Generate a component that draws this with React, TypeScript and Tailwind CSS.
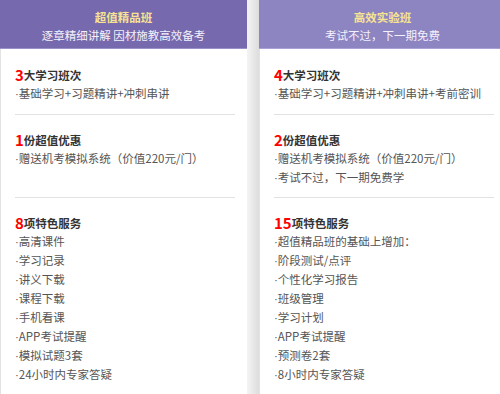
const plans = [
  {
    name: "超值精品班",
    slogan: "逐章精细讲解 因材施教高效备考",
    head: "bg-[#7669ad] border-[#9a91ca]",
    sections: [
      { num: "3", title: "大学习班次", items: ["基础学习+习题精讲+冲刺串讲"] },
      { num: "1", title: "份超值优惠", items: ["赠送机考模拟系统（价值220元/门）"] },
      {
        num: "8",
        title: "项特色服务",
        items: ["高清课件", "学习记录", "讲义下载", "课程下载", "手机看课", "APP考试提醒", "模拟试题3套", "24小时内专家答疑"],
      },
    ],
  },
  {
    name: "高效实验班",
    slogan: "考试不过，下一期免费",
    head: "bg-[#8d84c2] border-[#aaa2d6]",
    sections: [
      { num: "4", title: "大学习班次", items: ["基础学习+习题精讲+冲刺串讲+考前密训"] },
      { num: "2", title: "份超值优惠", items: ["赠送机考模拟系统（价值220元/门）", "考试不过，下一期免费学"] },
      {
        num: "15",
        title: "项特色服务",
        items: ["超值精品班的基础上增加：", "阶段测试/点评", "个性化学习报告", "班级管理", "学习计划", "APP考试提醒", "预测卷2套", "8小时内专家答疑"],
      },
    ],
  },
];

// row heights shared by both columns so the dividers line up
const rowHeights = ["h-[66px] pt-[17px]", "h-[83px] pt-[16px]", "pt-[16px]"];

function PlanColumn({ plan }: { plan: (typeof plans)[number] }) {
  return (
    <div className="w-[247px] shrink-0 bg-white flex flex-col">
      <div className={`h-[49px] border-b text-center pt-[8px] ${plan.head}`}>
        <div className="text-[11.5px] leading-[18px] font-bold text-[#f7e391]">{plan.name}</div>
        <div className="text-[11.5px] leading-[18px] text-[#f3f1fb]">{plan.slogan}</div>
      </div>
      <div className="flex-1 border-l border-[#e3e3e3]">
        {plan.sections.map((s, i) => (
          <div
            key={i}
            className={`ml-[14px] mr-[12px] ${rowHeights[i]} ${i < 2 ? "border-b border-[#e2e2e2]" : ""}`}
          >
            <div className="text-[11.5px] leading-[17px] font-semibold text-[#333]">
              <span className="text-[15px] font-bold text-[#ff0000] align-[-1px]">{s.num}</span>
              {s.title}
            </div>
            {s.items.map((item) => (
              <div key={item} className="text-[11.5px] leading-[18px] text-[#555]">
                <span className="font-['Liberation_Sans']">·</span>
                {item}
              </div>
            ))}
          </div>
        ))}
      </div>
    </div>
  );
}

export default function App() {
  return (
    <div
      className="w-[500px] h-[394px] overflow-hidden bg-white"
      style={{ fontFamily: '"Noto Sans CJK SC", "Liberation Sans", sans-serif' }}
    >
      <div className="flex h-full w-[506px]">
        <PlanColumn plan={plans[0]} />
        <div className="w-[12px] shrink-0 bg-gradient-to-r from-[#f4f4f4] to-[#dddddd]" />
        <PlanColumn plan={plans[1]} />
      </div>
    </div>
  );
}
